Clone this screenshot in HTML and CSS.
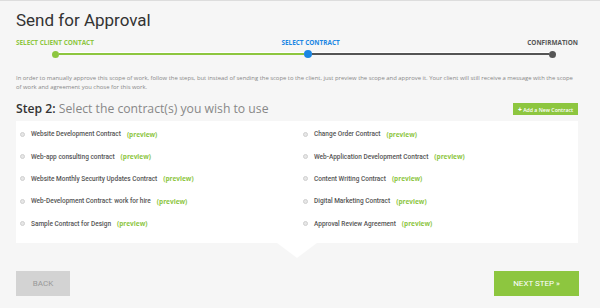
FILE: index.html
```html
<!DOCTYPE html>
<html lang="en">
<head>
    <meta charset="UTF-8">
    <meta name="viewport" content="width=device-width, initial-scale=1.0">
    <title>Send for Approval</title>
    <link rel="stylesheet" href="styles.css">
</head>
<body>
    <div class="page">
        <h1 class="page-title">Send for Approval</h1>

        <div class="steps">
            <div class="step-label done">Select Client Contact</div>
            <div class="step-label current">Select Contract</div>
            <div class="step-label">Confirmation</div>
        </div>
        <div class="track">
            <span class="dot done"></span>
            <span class="bar done"></span>
            <span class="dot current"></span>
            <span class="bar"></span>
            <span class="dot"></span>
        </div>

        <p class="intro">In order to manually approve this scope of work, follow the steps, but instead of sending the scope to the client, just preview the scope and approve it. Your client will still receive a message with the scope of work and agreement you chose for this work.</p>

        <div class="step-head">
            <h2 class="step-title"><b>Step 2:</b> Select the contract(s) you wish to use</h2>
            <button class="add-btn"><b>+</b> Add a New Contract</button>
        </div>

        <div class="panel">
            <div class="contract-list">
                <label class="contract"><span class="radio"></span>Website Development Contract <a class="preview">(preview)</a></label>
                <label class="contract"><span class="radio"></span>Change Order Contract <a class="preview">(preview)</a></label>
                <label class="contract"><span class="radio"></span>Web-app consulting contract <a class="preview">(preview)</a></label>
                <label class="contract"><span class="radio"></span>Web-Application Development Contract <a class="preview">(preview)</a></label>
                <label class="contract"><span class="radio"></span>Website Monthly Security Updates Contract <a class="preview">(preview)</a></label>
                <label class="contract"><span class="radio"></span>Content Writing Contract <a class="preview">(preview)</a></label>
                <label class="contract"><span class="radio"></span>Web-Development Contract: work for hire <a class="preview">(preview)</a></label>
                <label class="contract"><span class="radio"></span>Digital Marketing Contract <a class="preview">(preview)</a></label>
                <label class="contract"><span class="radio"></span>Sample Contract for Design <a class="preview">(preview)</a></label>
                <label class="contract"><span class="radio"></span>Approval Review Agreement <a class="preview">(preview)</a></label>
            </div>
        </div>

        <div class="actions">
            <button class="back-btn">BACK</button>
            <button class="next-btn">NEXT STEP &raquo;</button>
        </div>
    </div>
</body>
</html>
```

FILE: styles.css
```css
:root {
    --green: #8dc63f;
    --blue: #1a86e3;
    --dark: #333333;
    --grey: #555555;
    --bg: #f6f6f6;
}

* {
    margin: 0;
    padding: 0;
    box-sizing: border-box;
}

body {
    font-family: Roboto, "Open Sans", sans-serif;
    background-color: var(--bg);
    border-top: 1px solid #dddddd;
    color: var(--dark);
}

.page {
    padding: 0 22px 0 16px;
}

.page-title {
    font-size: 17px;
    font-weight: 400;
    line-height: 20px;
    padding-top: 9px;
    color: #333;
}

.steps {
    display: flex;
    justify-content: space-between;
    margin-top: 9px;
}

.step-label {
    font-family: "Open Sans", sans-serif;
    font-size: 6.4px;
    font-weight: 700;
    line-height: 8px;
    text-transform: uppercase;
    color: var(--grey);
}

.step-label.done {
    color: var(--green);
}

.step-label.current {
    color: var(--blue);
}

.track {
    display: flex;
    align-items: center;
    padding: 0 22px 0 36px;
    margin-top: 3px;
    height: 8px;
}

.dot {
    width: 7px;
    height: 7px;
    border-radius: 50%;
    background: var(--grey);
    flex-shrink: 0;
}

.dot.done {
    background: var(--green);
}

.dot.current {
    width: 8px;
    height: 8px;
    background: var(--blue);
}

.bar {
    flex: 241;
    height: 2px;
    background: var(--grey);
    box-shadow: 0 -1px 0 #ffffff;
}

.bar.done {
    flex: 249;
    background: var(--green);
}

.intro {
    font-family: "Open Sans", sans-serif;
    font-size: 5.9px;
    line-height: 9px;
    color: #888;
    margin-top: 16px;
}

.step-head {
    display: flex;
    justify-content: space-between;
    align-items: center;
    margin-top: 9px;
}

.step-title {
    font-family: "Open Sans", sans-serif;
    font-size: 12.2px;
    font-weight: 400;
    line-height: 16px;
    color: #888;
}

.step-title b {
    font-weight: 600;
    color: var(--dark);
}

.add-btn {
    font-family: "Open Sans", sans-serif;
    font-size: 5.2px;
    font-weight: 600;
    color: #fff;
    background: var(--green);
    border: none;
    width: 65px;
    height: 12px;
}

.add-btn b {
    font-size: 6.5px;
    font-weight: 800;
}

.panel {
    position: relative;
    background: #fff;
    margin-top: 4px;
    padding: 2px 0 8px 4px;
}

.panel::after {
    content: "";
    position: absolute;
    left: 50%;
    bottom: -15px;
    margin-left: -20px;
    border-left: 20px solid transparent;
    border-right: 20px solid transparent;
    border-top: 15px solid #fff;
}

.contract-list {
    display: grid;
    grid-template-columns: 283px 1fr;
    grid-auto-rows: 22.4px;
    align-items: center;
}

.contract {
    display: flex;
    align-items: center;
    font-size: 6.5px;
    font-weight: 500;
    color: var(--grey);
}

.radio {
    width: 5px;
    height: 5px;
    border-radius: 50%;
    border: 1px solid #cfcfcf;
    background: #e6e6e6;
    margin-right: 6px;
}

.preview {
    font-family: "Open Sans", sans-serif;
    font-weight: 700;
    color: var(--green);
    margin-left: 6px;
}

.actions {
    display: flex;
    justify-content: space-between;
    margin-top: 28px;
}

.back-btn,
.next-btn {
    font-family: Roboto, sans-serif;
    font-size: 8px;
    height: 25px;
    border: none;
}

.back-btn {
    width: 54px;
    background: #d3d3d3;
    color: #999;
}

.next-btn {
    width: 85px;
    margin-right: -1px;
    background: var(--green);
    color: #fff;
}
```
